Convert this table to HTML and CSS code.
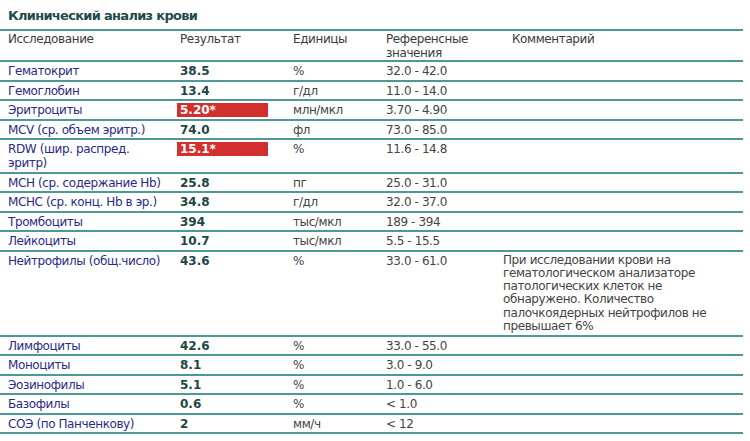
FILE: index.html
```html
<!DOCTYPE html>
<html lang="ru">
<head>
<meta charset="utf-8">
<title>Клинический анализ крови</title>
<link rel="stylesheet" href="styles.css">
</head>
<body>
<div class="page">
  <h1 class="title">Клинический анализ крови</h1>
  <table class="lab">
    <colgroup>
      <col class="c-name"><col class="c-res"><col class="c-unit"><col class="c-ref"><col class="c-com">
    </colgroup>
    <thead>
      <tr class="head">
        <th class="name">Исследование</th>
        <th class="res">Результат</th>
        <th>Единицы</th>
        <th>Референсные<br>значения</th>
        <th class="com-h">Комментарий</th>
      </tr>
    </thead>
    <tbody>
      <tr><td class="name">Гематокрит</td><td class="res">38.5</td><td>%</td><td>32.0 - 42.0</td><td></td></tr>
      <tr><td class="name">Гемоглобин</td><td class="res">13.4</td><td>г/дл</td><td>11.0 - 14.0</td><td></td></tr>
      <tr><td class="name">Эритроциты</td><td class="res"><span class="flag">5.20*</span></td><td>млн/мкл</td><td>3.70 - 4.90</td><td></td></tr>
      <tr><td class="name">MCV (ср. объем эритр.)</td><td class="res">74.0</td><td>фл</td><td>73.0 - 85.0</td><td></td></tr>
      <tr><td class="name">RDW (шир. распред.<br>эритр)</td><td class="res"><span class="flag">15.1*</span></td><td>%</td><td>11.6 - 14.8</td><td></td></tr>
      <tr><td class="name">MCH (ср. содержание Hb)</td><td class="res">25.8</td><td>пг</td><td>25.0 - 31.0</td><td></td></tr>
      <tr><td class="name">MCHC (ср. конц. Hb в эр.)</td><td class="res">34.8</td><td>г/дл</td><td>32.0 - 37.0</td><td></td></tr>
      <tr><td class="name">Тромбоциты</td><td class="res">394</td><td>тыс/мкл</td><td>189 - 394</td><td></td></tr>
      <tr><td class="name">Лейкоциты</td><td class="res">10.7</td><td>тыс/мкл</td><td>5.5 - 15.5</td><td></td></tr>
      <tr class="tall"><td class="name">Нейтрофилы (общ.число)</td><td class="res">43.6</td><td>%</td><td>33.0 - 61.0</td><td class="com">При исследовании крови на гематологическом анализаторе патологических клеток не обнаружено. Количество палочкоядерных нейтрофилов не превышает 6%</td></tr>
      <tr><td class="name">Лимфоциты</td><td class="res">42.6</td><td>%</td><td>33.0 - 55.0</td><td></td></tr>
      <tr><td class="name">Моноциты</td><td class="res">8.1</td><td>%</td><td>3.0 - 9.0</td><td></td></tr>
      <tr><td class="name">Эозинофилы</td><td class="res">5.1</td><td>%</td><td>1.0 - 6.0</td><td></td></tr>
      <tr><td class="name">Базофилы</td><td class="res">0.6</td><td>%</td><td>&lt; 1.0</td><td></td></tr>
      <tr class="last"><td class="name">СОЭ (по Панченкову)</td><td class="res">2</td><td>мм/ч</td><td>&lt; 12</td><td></td></tr>
    </tbody>
  </table>
</div>
</body>
</html>
```

FILE: styles.css
```css
html, body {
  margin: 0;
  padding: 0;
  background: #ffffff;
}
body {
  font-family: "DejaVu Sans", "Liberation Sans", sans-serif;
  font-size: 12px;
  letter-spacing: -0.4px;
  color: #444;
}
.page {
  width: 750px;
  height: 441px;
  overflow: hidden;
}
.title {
  margin: 0;
  padding: 8px 0 0 8px;
  height: 21px;
  font-size: 13px;
  line-height: 16px;
  font-weight: bold;
  letter-spacing: -0.7px;
  color: #1f4b4b;
}
.lab {
  border-collapse: collapse;
  table-layout: fixed;
  width: 743px;
}
.c-name { width: 177px; }
.c-res { width: 116px; }
.c-unit { width: 93px; }
.c-ref { width: 117px; }
.c-com { width: 240px; }
.lab th, .lab td {
  border-top: 2px solid #4f9898;
  padding: 2px 0 1.5px 0;
  line-height: 14px;
  text-align: left;
  vertical-align: top;
  font-weight: normal;
  white-space: nowrap;
}
.lab tr.last td {
  border-bottom: 2px solid #4f9898;
}
.lab th {
  color: #3b3b3b;
  padding: 1px 0 0 0;
}
.lab .name {
  padding-left: 8px;
  color: #2a2a86;
}
.lab th.name { color: #3b3b3b; }
.lab td.res {
  padding-left: 3px;
  font-weight: bold;
  letter-spacing: 0;
  color: #1e4646;
}
.lab th.res { padding-left: 3px; }
.lab th.com-h { padding-left: 9px; }
.flag {
  display: block;
  margin-left: -3px;
  width: 88px;
  padding-left: 3px;
  background: #d32f2f;
  color: #ffffff;
  line-height: 14px;
}
.lab td.com {
  white-space: normal;
  line-height: 13.3px;
  padding-right: 10px;
}
```
